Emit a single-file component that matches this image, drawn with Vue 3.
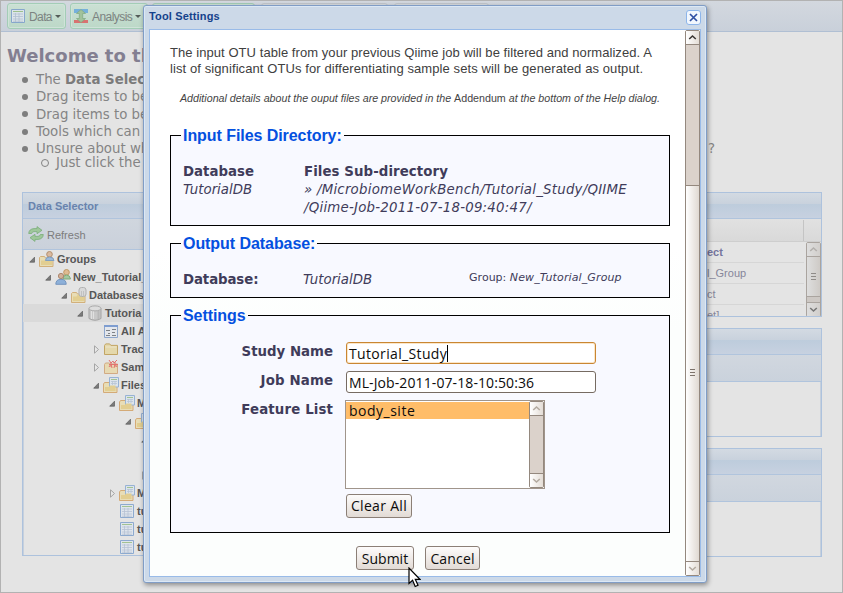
<script setup>
const tree = [
  { level: 0, arrow: 'open', icon: 'user-folder', label: 'Groups' },
  { level: 1, arrow: 'open', icon: 'users', label: 'New_Tutorial_' },
  { level: 2, arrow: 'open', icon: 'db-folder', label: 'Databases' },
  { level: 3, arrow: 'open', icon: 'db', label: 'Tutoria', selected: true },
  { level: 4, arrow: '', icon: 'form', label: 'All A' },
  { level: 4, arrow: 'closed', icon: 'folder', label: 'Trac' },
  { level: 4, arrow: 'closed', icon: 'sample', label: 'Sam' },
  { level: 4, arrow: 'open', icon: 'files', label: 'Files' },
  { level: 5, arrow: 'open', icon: 'files', label: 'M' },
  { level: 6, arrow: 'open', icon: 'files', label: '' },
  { level: 7, arrow: 'open', icon: '', label: '' },
  { level: 7, arrow: '', icon: '', label: '' },
  { level: 7, arrow: 'closed', icon: '', label: '' },
  { level: 5, arrow: 'closed', icon: 'files', label: 'M' },
  { level: 5, arrow: '', icon: 'table', label: 'tu' },
  { level: 5, arrow: '', icon: 'table', label: 'tu' },
  { level: 5, arrow: '', icon: 'table', label: 'tu' },
]
const rows = ['ect', 'l_Group', 'ct', 'et]']
</script>

<template>
  <div class="screen">
    <svg class="defs" width="0" height="0">
      <symbol id="folder" viewBox="0 0 16 16">
        <path d="M1.5 13.5v-9l1.2-1.6h4l1.2 1.5h6.6v9.1z" fill="#e5d6a2" stroke="#bd9b4e" />
        <path d="M2.5 6h11" stroke="#eee6c6" />
      </symbol>
      <symbol id="half-folder" viewBox="0 0 16 16">
        <path d="M.5 15.500v-9l1-1h4l1 1.500h7.500v8.500z" fill="#e9dcae" stroke="#cfa768" />
        <path d="M2 9.500h3.500l1-1.500H13v6H2z" fill="#e2cb83" />
      </symbol>
      <symbol id="user-folder" viewBox="0 0 16 16">
        <use href="#half-folder" />
        <circle cx="10.500" cy="3.300" r="2.800" fill="#d9b393" stroke="#ab815b" />
        <path d="M6.500 9.500q0-3.500 4-3.500t4.500 3.500z" fill="#91b3d8" stroke="#6e93bd" />
      </symbol>
      <symbol id="users" viewBox="0 0 16 16">
        <circle cx="11.500" cy="3.300" r="2.800" fill="#dfb484" stroke="#b98c4d" />
        <path d="M8 10q0-4 3.500-4t4 4z" fill="#9ac493" stroke="#6e9f69" />
        <circle cx="6" cy="7" r="2.600" fill="#d1a98d" stroke="#a27658" />
        <path d="M.8 15.300q0-5 5.200-5t5.200 5z" fill="#7fa8d8" stroke="#6288b8" />
      </symbol>
      <symbol id="db-folder" viewBox="0 0 16 16">
        <use href="#half-folder" />
        <rect x="8" y=".5" width="7" height="9" rx="2.500" fill="#d8d8d8" stroke="#a8a8a8" />
        <path d="M10.500 4v5M12.500 4v5" stroke="#bcbcbc" />
      </symbol>
      <symbol id="db" viewBox="0 0 16 16">
        <path d="M2 3.500v10q6 3.500 12 0v-10z" fill="#c6c6c6" stroke="#999" />
        <path d="M4.500 6v8M6.500 6v8" stroke="#e2e2e2" />
        <path d="M11.500 6v8" stroke="#b2b2b2" stroke-width="2" />
        <ellipse cx="8" cy="3.400" rx="6" ry="2.500" fill="#dedede" stroke="#a2a2a2" />
      </symbol>
      <symbol id="form" viewBox="0 0 16 16">
        <path d="M1.500 2.500h13v12h-13z" fill="#e4e8ee" stroke="#7f9cc8" />
        <path d="M1 3h14" stroke="#6d91cd" stroke-width="2" />
        <path d="M3 7.500h4M9 6.500h4M5 10.500h2M9 9.500h3M3 12.500h4M9 12.500h4" stroke="#6d7277" />
      </symbol>
      <symbol id="sample" viewBox="0 0 16 16">
        <path d="M1.500 14.500v-9l1-1.500h4l1 1h7v9.500z" fill="#e8d9ab" stroke="#d0a173" />
        <path d="M6 1l2 3 2-2 1 2 3-3M6 8l2-3 1 4M14 8l-2-3-1 4M6 5.500h9M8 3v5M12 3v5" fill="none" stroke="#e3605c" />
      </symbol>
      <symbol id="table" viewBox="0 0 16 16">
        <path d="M1.500 1.500h13v13h-13z" fill="#dfe6ee" stroke="#7fa0cc" />
        <path d="M3 3.500h10" stroke="#97bd84" />
        <path d="M3 6h10M3 8.500h10M3 11h10M3 13.200h10M5.500 5v9M9 5v9" stroke="#aebdd2" stroke-width=".8" />
      </symbol>
      <symbol id="files" viewBox="0 0 16 16">
        <path d="M.5 15.500V7l1-1.500h12.500v10z" fill="#e9dcae" stroke="#d2a064" />
        <path d="M6.500.5h9v9.500h-9z" fill="#dbe4ee" stroke="#8aaad2" />
        <path d="M8 2.500h6" stroke="#97bd84" />
        <path d="M8 4.500h6M8 6.500h6M9.500 4v4M12 4v4" stroke="#b0bfd2" stroke-width=".8" />
        <path d="M2 10h4l1-1.500h5.500V14H2z" fill="#e2cb83" />
      </symbol>
      <symbol id="refresh" viewBox="0 0 16 16">
        <path d="M.7 7.500Q1 3 6 2.600h3V.6l5 3.700-5 3.400V5.600H6Q4 5.800 3.700 7.500z" fill="#9fc79b" stroke="#7aad79" stroke-width=".8" />
        <path d="M15.300 8.500Q15 13 10 13.400H7v2l-5-3.700 5-3.400v2.100h3q2-.2 2.300-1.900z" fill="#9fc79b" stroke="#7aad79" stroke-width=".8" />
      </symbol>
      <symbol id="up" viewBox="0 0 13 13">
        <path d="M3.200 8 6.500 5l3.300 3" fill="none" stroke="currentColor" stroke-width="1.600" />
      </symbol>
      <symbol id="down" viewBox="0 0 13 13">
        <path d="M3.200 5 6.500 8l3.300-3" fill="none" stroke="currentColor" stroke-width="1.600" />
      </symbol>
    </svg>

    <nav class="toolbar">
      <div class="tool data">
        <svg class="tool-icon" viewBox="0 0 16 16"><use href="#table" /></svg>
        <span>Data</span><i class="caret"></i>
      </div>
      <div class="tool analysis">
        <svg class="tool-icon" viewBox="0 0 16 16">
          <path d="M1 1h14v4H1z" fill="#6aaade" /><path d="M1 12h14v3H1z" fill="#dc6464" />
          <path d="M8 1.500l4.500 4H9.700v5h2.800L8 14.500l-4.500-4h2.800v-5H3.500z" fill="#9dbf95" stroke="#76a275" stroke-width=".7" />
        </svg>
        <span>Analysis</span><i class="caret"></i>
      </div>
      <div class="tool third"></div>
      <div class="tool plain fourth"></div>
      <div class="tool plain fifth"></div>
    </nav>

    <section class="welcome">
      <h1>Welcome to th</h1>
      <ul>
        <li>The <b>Data Selec</b></li>
        <li>Drag items to be</li>
        <li>Drag items to be</li>
        <li>Tools which can</li>
        <li class="wide"><span>Unsure about wh</span><span>?</span></li>
        <li class="sub">Just click the</li>
      </ul>
    </section>

    <main class="panels">
      <section class="panel selector">
        <header>Data Selector</header>
        <div class="refresh"><svg viewBox="0 0 16 16"><use href="#refresh" /></svg><span>Refresh</span></div>
        <div class="tree">
          <div v-for="(n, i) in tree" :key="i" class="node" :class="{ selected: n.selected }" :style="{ paddingLeft: 5 + n.level * 16 + 'px' }">
            <svg class="arrow" viewBox="0 0 9 9">
              <path v-if="n.arrow === 'open'" d="M1.700 7.200h4.800V2.200z" fill="#7a7a7a" stroke="#5a5a5a" stroke-width=".7" />
              <path v-if="n.arrow === 'closed'" d="M2.500.8v7.400L6.500 4.500z" fill="#e8e8e8" stroke="#a5a5a5" />
            </svg>
            <svg class="icon" viewBox="0 0 16 16"><use v-if="n.icon" :href="'#' + n.icon" /></svg>
            <span>{{ n.label }}</span>
          </div>
        </div>
      </section>

      <div class="column">
        <section class="panel grid">
          <header></header>
          <div class="grid-head"><span></span></div>
          <div class="grid-body">
            <div class="grid-rows">
              <div v-for="(r, i) in rows" :key="r" class="grid-row" :class="{ strong: i === 0 }">{{ r }}</div>
            </div>
            <div class="bar faded">
              <svg class="end" viewBox="0 0 13 13"><use href="#up" /></svg>
              <div class="thumb"><i></i><i></i><i></i></div>
              <div class="track"></div>
              <svg class="end dark" viewBox="0 0 13 13"><use href="#down" /></svg>
            </div>
          </div>
        </section>
        <section class="panel empty"><header></header><div class="strip"></div></section>
        <section class="panel empty"><header></header><div class="strip"></div></section>
      </div>
    </main>

    <div class="dialog">
      <header class="title">
        <span>Tool Settings</span>
        <svg class="close" viewBox="0 0 15 15">
          <rect x=".5" y=".5" width="14" height="14" rx="2.500" fill="#f1f7fe" stroke="#8db5ea" />
          <path d="M4 4l7 7M11 4l-7 7" stroke="#2e50a4" stroke-width="1.700" />
        </svg>
      </header>
      <div class="body">
        <div class="content">
          <p class="intro"><span class="l1">The input OTU table from your previous Qiime job will be filtered and normalized. A</span><br><span class="l2">list of significant OTUs for differentiating sample sets will be generated as output.</span></p>
          <p class="note">Additional details about the ouput files are provided in the <span>Addendum</span> at the bottom of the Help dialog.</p>

          <fieldset class="inputs">
            <legend>Input Files Directory:</legend>
            <div class="files">
              <div class="db-col"><b>Database</b><em>TutorialDB</em></div>
              <div><b class="subdir">Files Sub-directory</b><em class="path">» /MicrobiomeWorkBench/Tutorial_Study/QIIME</em><em class="path">/Qiime-Job-2011-07-18-09:40:47/</em></div>
            </div>
          </fieldset>

          <fieldset class="output">
            <legend>Output Database:</legend>
            <div class="out-row">
              <b>Database:</b><em>TutorialDB</em>
              <span class="group">Group: <em>New_Tutorial_Group</em></span>
            </div>
          </fieldset>

          <fieldset class="settings">
            <legend>Settings</legend>
            <div class="form">
              <label>Study Name</label>
              <div class="field focus"><span class="study">Tutorial_Study</span><i class="text-caret"></i></div>
              <label class="spaced">Job Name</label>
              <div class="field"><span class="job">ML-Job-2011-07-18-10:50:36</span></div>
              <label class="spaced">Feature List</label>
              <div>
                <div class="listbox">
                  <div class="options"><div class="option">body_site</div></div>
                  <div class="bar">
                    <svg class="end" viewBox="0 0 13 13"><use href="#up" /></svg>
                    <div class="track"></div>
                    <svg class="end" viewBox="0 0 13 13"><use href="#down" /></svg>
                  </div>
                </div>
                <button class="clear">Clear All</button>
              </div>
            </div>
          </fieldset>

          <div class="actions">
            <button class="submit">Submit</button>
            <button class="cancel">Cancel</button>
          </div>
        </div>
        <div class="bar main-bar">
          <svg class="end dark" viewBox="0 0 13 13"><use href="#up" /></svg>
          <div class="track"></div>
          <div class="thumb"><i></i><i></i><i></i></div>
          <svg class="end" viewBox="0 0 13 13"><use href="#down" /></svg>
        </div>
      </div>
    </div>

    <svg class="cursor" viewBox="0 0 13 21">
      <path d="M1 1v15.500l3.600-3.300 2.600 6.300 2.800-1.200-2.700-6h4.600z" fill="#fff" stroke="#000" stroke-width="1.200" />
    </svg>
  </div>
</template>

<style>
body { margin: 0; }
</style>

<style scoped>
* { box-sizing: border-box; }
.screen {
  position: relative;
  width: 843px;
  height: 593px;
  overflow: hidden;
  border: 1px solid #b2b2b2;
  background: #e4e4e4;
  font-family: "Liberation Sans", Arial, sans-serif;
}
.defs { position: absolute; }
svg { display: block; flex: none; }

.toolbar {
  display: flex;
  height: 31px;
  padding: 2px 0 0 6px;
  border-bottom: 1px solid #b0bfd3;
  background: linear-gradient(#d3d8df, #c9d0da);
}
.tool {
  display: flex;
  align-items: center;
  height: 26px;
  padding-left: 3px;
  border: 1px solid #a3cdb6;
  border-radius: 3px;
  background: linear-gradient(#cbe0d4, #bcd8c8);
  box-shadow: inset 0 0 0 1px #cfe3d8;
  color: #7c8381;
  font-size: 12px;
}
.data { width: 59px; margin-right: 4px; }
.analysis { width: 78px; margin-right: 4px; }
.third { width: 103px; margin-right: 6px; }
.plain { border-color: #c2c6cb; background: #d8dce1; box-shadow: none; }
.fourth { width: 127px; margin-right: 6px; }
.fifth { width: 95px; }
.tool-icon { width: 16px; height: 16px; margin: -1px 3px 0 -1px; opacity: .88; }
.tool span { padding-top: 2px; }
.data span { letter-spacing: -.6px; }
.analysis span { letter-spacing: -.55px; }
.caret { margin-left: 3px; border: 3px solid transparent; border-top-color: #545c58; border-bottom: 0; }

.welcome {
  height: 160px;
  padding: 13px 0 0 6px;
  overflow: hidden;
  color: #848484;
  font-family: "DejaVu Sans", Verdana, sans-serif;
}
h1 { margin: 0 0 4px; color: #837f91; font-size: 18px; line-height: 22px; white-space: nowrap; }
ul { margin: 0; padding: 0; list-style: none; }
li { display: flex; align-items: center; height: 17.300px; font-size: 13.330px; line-height: 17.300px; white-space: pre; }
li b { color: #7b7b7b; }
li span { flex: none; }
li::before { content: ""; flex: none; width: 6px; height: 6px; margin: 0 8px 0 15px; border-radius: 50%; background: #7e7e7e; }
li.wide span:first-child { width: 672px; }
li.sub { margin-top: -3px; }
li.sub::before { margin: 0 7px 0 34px; border: 1px solid #828282; background: none; }

.panels { display: flex; gap: 6px; padding-left: 21px; }
.panel { border: 1px solid #adc2dd; background: #e4e4e4; overflow: hidden; }
.panel > header {
  height: 26px;
  padding-left: 5px;
  border-bottom: 1px solid #b0c4dd;
  background: linear-gradient(#d3dae2, #c9d2dd 42%, #bdccdc 44%, #c7d1e0);
  color: #6983ad;
  font-size: 11px;
  font-weight: bold;
  line-height: 26px;
}
.selector { width: 440px; height: 364px; box-shadow: inset 1px 0 #c6d0dd; }
.refresh {
  display: flex;
  align-items: center;
  gap: 3px;
  height: 31px;
  padding-left: 5px;
  border-bottom: 1px solid #b0c4dd;
  background: linear-gradient(#d0d6de, #cad1db);
  color: #7c7c7c;
  font-size: 11px;
}
.refresh svg { width: 16px; height: 16px; }
.refresh span { padding-top: 2px; }
.node { display: flex; align-items: center; height: 18px; color: #575757; font-size: 11px; font-weight: bold; }
.node.selected { background: #dadada; }
.arrow { width: 9px; height: 9px; margin-right: 2px; }
.icon { width: 16px; height: 16px; margin-right: 2px; opacity: .85; }

.column { width: 354px; }
.grid { height: 125px; margin-bottom: 11px; }
.grid-head { display: flex; justify-content: flex-end; height: 23px; border-bottom: 1px solid #cecece; background: linear-gradient(#e1e1e1, #d9d9d9); }
.grid-head span { width: 18px; margin-top: 1px; border-left: 1px solid #c4c4c4; }
.grid-body { display: flex; height: 75px; }
.grid-rows { flex: 1; overflow: hidden; margin-right: 2px; }
.grid-row { height: 21px; padding-left: 238px; border-bottom: 1px solid #d6d6d6; color: #86869a; font-size: 11px; line-height: 20px; }
.grid-row.strong { color: #75759e; font-weight: bold; }
.empty { height: 109px; margin-bottom: 11px; box-shadow: inset -1px 0 #c6d0dd; }
.empty .strip { height: 27px; border-bottom: 1px solid #b0c4dd; background: linear-gradient(#d1d7df, #cad2dc); }

.bar { display: flex; flex-direction: column; width: 15px; border: 1px solid #94887e; border-radius: 2px; background: #dbd2cb; color: #b3aaa0; }
.bar .end { width: 13px; height: 14px; background: linear-gradient(90deg, #fff, #e4ddd6); }
.bar .end:first-child { border-bottom: 1px solid #94887e; }
.bar .end:last-child { border-top: 1px solid #94887e; }
.bar .dark { color: #3c3835; }
.track { flex: 1; }
.thumb {
  display: flex;
  flex-direction: column;
  align-items: center;
  justify-content: center;
  gap: 2px;
  border-top: 1px solid #94887e;
  background: linear-gradient(90deg, #fff, #e0d9d2);
}
.thumb i { width: 5px; height: 1px; background: #7d736b; }
.bar.faded { height: 75px; border-color: #aaa49f; background: #cdc8c4; color: #b3b0ad; }
.faded .end { background: linear-gradient(90deg, #dedede, #d2cfcc); }
.bar.faded .end { border-color: #aaa49f; }
.bar.faded .dark { color: #777; }
.faded .thumb { height: 40px; border-bottom: 1px solid #aaa49f; border-top: 0; background: linear-gradient(90deg, #dedede, #cecac6); }
.faded .thumb i { background: #8f8b88; }

.dialog {
  position: absolute;
  left: 142px;
  top: 4px;
  width: 564px;
  height: 578px;
  padding: 0 5px;
  border: 1px solid #809dc6;
  border-radius: 3px;
  background: #ccd9e8;
  box-shadow: inset 0 0 0 1px #dce8f5, 1px 2px 5px rgba(0, 0, 0, .4);
}
.title { display: flex; justify-content: space-between; height: 23px; color: #15428b; font-size: 11px; font-weight: bold; letter-spacing: .15px; line-height: 21px; }
.close { width: 15px; height: 15px; margin-top: 4px; }
.body { display: flex; height: 548px; border: 1px solid #99bbe8; background: linear-gradient(#fff 40%, #fcfefd 55%); }
.content { width: 535px; padding: 15px 0 0 20px; }
p { margin: 0; white-space: nowrap; }
.intro { color: #404040; font-size: 13px; line-height: 16px; }
.l1 { letter-spacing: .06px; }
.l2 { letter-spacing: .095px; }
.note { margin: 13px 0 20px 10px; color: #444; font-size: 10.680px; font-style: italic; line-height: 16px; }
.note span { font-style: normal; }

fieldset {
  width: 500px;
  min-width: 0;
  margin: 0 0 8px;
  padding: 0;
  border: 1px solid #000;
  background: #f8f9ff;
  color: #403c5a;
  font-family: "DejaVu Sans", Verdana, sans-serif;
  font-size: 13.330px;
}
legend { height: 18px; margin-left: 10px; padding: 0 2px; color: #0450e0; font: bold 16px/20px "Liberation Sans", Arial, sans-serif; letter-spacing: -.06px; }
.inputs { height: 100px; }
.output { height: 64px; }
.settings { height: 227px; }
.files { display: flex; padding: 19px 0 0 12px; white-space: nowrap; }
.files b, .files em { display: block; height: 18px; line-height: 18px; }
.subdir { letter-spacing: .08px; }
.path { letter-spacing: .235px; }
.db-col { width: 121px; }
.out-row { display: flex; align-items: center; height: 18px; margin-top: 18px; padding-left: 12px; white-space: nowrap; }
.out-row b { width: 120px; letter-spacing: -.1px; }
.group { margin: -4px 0 0 97px; font-size: 11px; }
.group em { letter-spacing: .12px; }
.form { display: grid; grid-template-columns: 162px 250px; grid-template-rows: 29px 29px auto; column-gap: 13px; padding-top: 18px; }
label { padding-top: 1px; font-weight: bold; line-height: 18px; text-align: right; }
label.spaced { margin-right: -.15px; letter-spacing: .15px; }
.field {
  display: flex;
  align-items: center;
  height: 22px;
  padding-left: 2px;
  border: 1px solid #766b62;
  border-radius: 3px;
  background: #fff;
  color: #0c0c0c;
  font: 14px "Open Sans", "Noto Sans", sans-serif;
  white-space: nowrap;
}
.field span { padding-top: 1px; }
.field.focus { border-color: #c98632; box-shadow: inset 0 0 0 1px #fbe6c8; }
.study { letter-spacing: .35px; }
.job { letter-spacing: .1px; }
.text-caret { width: 1px; height: 17px; background: #000; }
.listbox { display: flex; width: 200px; height: 89px; margin-left: -1px; border: 1px solid #a0958b; background: #fff; }
.options { flex: 1; padding-top: 1px; }
.option { height: 17px; padding-left: 3px; background: #ffbd69; color: #0c0c0c; font: 14px/17px "Open Sans", "Noto Sans", sans-serif; letter-spacing: .5px; }
button {
  display: block;
  height: 24px;
  padding: 0;
  border: 1px solid #8b7f76;
  border-radius: 3px;
  background: linear-gradient(#fdfcfb, #e2dbd5);
  color: #0c0c0c;
  font: 14px/20px "Open Sans", "Noto Sans", sans-serif;
  white-space: nowrap;
}
.clear { width: 66px; margin-top: 5px; letter-spacing: .3px; }
.actions { display: flex; gap: 11px; margin: 13px 0 0 186px; }
.actions button { padding-top: 2px; }
.submit { width: 58px; }
.cancel { width: 55px; letter-spacing: .15px; }
.main-bar { height: 546px; }
.main-bar .track { height: 140px; flex: none; }
.main-bar .thumb { flex: 1; padding-bottom: 2px; }
.cursor { position: absolute; left: 407px; top: 566px; width: 13px; height: 21px; }
</style>
